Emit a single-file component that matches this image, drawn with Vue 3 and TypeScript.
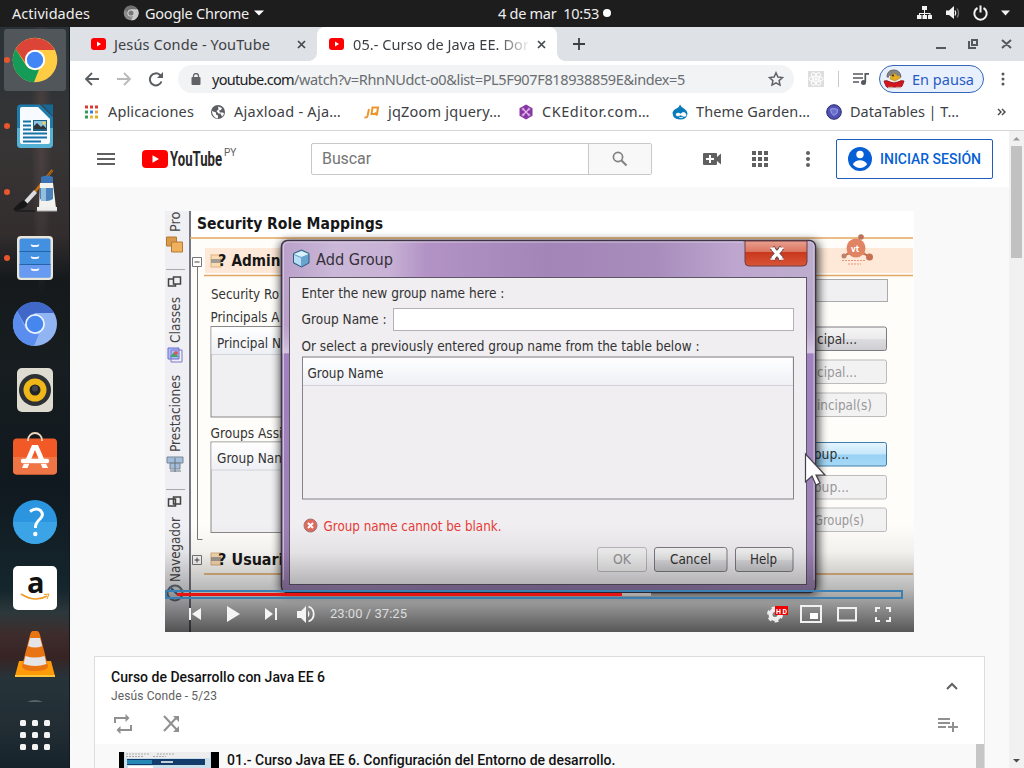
<script setup lang="ts">
import type { Directive } from 'vue'

/* Spreads a label over the given width by adjusting its tracking. */
const vFit: Directive<HTMLElement, number> = {
  mounted(el, { value }) {
    const natural = el.getBoundingClientRect().width
    const count = (el.textContent ?? '').length
    if (count > 0) el.style.letterSpacing = `${(value - natural) / count}px`
  },
}

interface Bookmark { icon: string; label: string; width: number }
const bookmarks: Bookmark[] = [
  { icon: 'apps', label: 'Aplicaciones', width: 86 },
  { icon: 'globe', label: 'Ajaxload - Aja…', width: 107 },
  { icon: 'jq', label: 'jqZoom jquery…', width: 113 },
  { icon: 'ck', label: 'CKEditor.com…', width: 108 },
  { icon: 'drop', label: 'Theme Garden…', width: 114 },
  { icon: 'table', label: 'DataTables | T…', width: 109 },
]
const appColors = ['#d93a32', '#d93a32', '#d93a32', '#2f9e58', '#3b7de0', '#e8a33a', '#2f9e58', '#e8b83a', '#d8b020']
const dock = ['chrome', 'writer', 'paint', 'files', 'chromium', 'rhythm', 'store', 'help', 'amazon', 'vlc']
const running = new Set(['chrome', 'writer', 'paint', 'files'])

interface SideButton { y: number; x: number; w: number; label: string; kind: string }
const sideButtons: SideButton[] = [
  { y: 327, x: 817, w: 40, label: 'cipal...', kind: 'on' },
  { y: 360, x: 817, w: 40, label: 'cipal...', kind: 'off' },
  { y: 393, x: 817, w: 55, label: 'incipal(s)', kind: 'off' },
  { y: 442.5, x: 814, w: 35, label: 'oup...', kind: 'hot' },
  { y: 475.5, x: 814, w: 35, label: 'oup...', kind: 'off' },
  { y: 508, x: 814, w: 50, label: 'Group(s)', kind: 'off' },
]
interface DialogButton { x: number; w: number; tx: number; tw: number; label: string; kind: string }
const dialogButtons: DialogButton[] = [
  { x: 597.5, w: 49, tx: 613, tw: 18, label: 'OK', kind: 'off' },
  { x: 654.5, w: 72.5, tx: 670, tw: 41, label: 'Cancel', kind: 'on' },
  { x: 735.5, w: 57.5, tx: 750, tw: 27, label: 'Help', kind: 'on' },
]
</script>

<template>
  <div class="desktop">
    <header class="topbar">
      <span v-fit="78" class="activities">Actividades</span>
      <svg class="app-mark" width="16" height="16" viewBox="0 0 16 16">
        <circle cx="8" cy="8" r="7.3" fill="#8b8b8b" />
        <path d="M8 4H14.5A7.3 7.3 0 0 1 8 15.3L11 9.5Z" fill="#c9c9c9" />
        <path d="M1.6 4.6A7.3 7.3 0 0 1 14.4 4.2H8L5 8Z" fill="#707070" />
        <circle cx="8" cy="8" r="3.6" fill="#d8d8d8" /><circle cx="8" cy="8" r="2.6" fill="#777" />
      </svg>
      <span v-fit="104" class="app-name">Google Chrome</span>
      <svg class="app-caret" width="10" height="6" viewBox="0 0 10 6"><path d="M0 .5H10L5 5.5Z" fill="#fff" /></svg>
      <span v-fit="101" class="clock">4 de mar&nbsp; 10:53</span>
      <i class="notice" />
      <svg class="tray" width="94" height="18" viewBox="0 0 94 18">
        <g fill="#f2f2f2">
          <path d="M5 2h5v4H5zM0 11h4.5v4H0zM5.500 11H10v4H5.500zM11 11h4v4h-4z" />
          <path d="M7 6h1v3h5.500v2.500h-1V10H8v2H7v-2H3v1.500H2V9h5z" />
          <path d="M29 6.500h3l5-4.500v13L32 11h-3z" />
          <path d="M84 6.500h9l-4.500 5z" />
        </g>
        <g fill="none" stroke="#f2f2f2">
          <path d="M38 6.500q1.500 2.500 0 5" stroke-width="1.300" /><path d="M40 4.500q3 4.500 0 9" stroke="#777" stroke-width="1.300" />
          <path d="M60.500 4a6.200 6.200 0 1 0 6 0M63.500 1.500v7" stroke-width="2" />
        </g>
      </svg>
    </header>

    <div class="workspace">
      <aside class="dock">
        <div v-for="name in dock" :key="name" class="dock-item" :class="{ active: name === 'chrome' }">
          <i v-if="running.has(name)" class="dot" />
          <svg width="46" height="46" viewBox="0 0 46 46">
            <g v-if="name === 'chrome'">
              <circle cx="23" cy="23" r="22.300" fill="#fc4" />
              <path d="M3.700 12A22.300 22.300 0 0 1 42.700 13H23L13.500 26Z" fill="#dc4437" />
              <path d="M3.700 12L14.500 29Q19 34 27 32.500L22 45.300A22.300 22.300 0 0 1 3.700 12Z" fill="#159b58" />
              <circle cx="23" cy="23" r="10.200" fill="#fff" /><circle cx="23" cy="23" r="8.200" fill="#4285f4" />
            </g>
            <g v-else-if="name === 'writer'">
              <path d="M9 1.500H28L41 14V41a4 4 0 0 1-4 4H9a4 4 0 0 1-4-4V5.500a4 4 0 0 1 4-4Z" fill="#1e7bab" />
              <path d="M30 1.500h11v12z" fill="#176795" /><path d="M5 25H41V41a4 4 0 0 1-4 4H9a4 4 0 0 1-4-4Z" fill="#55b2d4" />
              <path d="M10 4H26L38 16V39a2 2 0 0 1-2 2H10a2 2 0 0 1-2-2V6a2 2 0 0 1 2-2Z" fill="#f7fbff" />
              <path d="M11 18.500h8M11 22.500h8M11 26.500h8M11 30.500h24M11 34.500h24M11 38.500h18" stroke="#1673a8" stroke-width="1.800" />
              <path d="M21 17h14v11H21z" fill="#1d6186" /><path d="M22 18h12v8H22z" fill="#8bc4e0" />
              <path d="M22 26v-3l3-3 4 4 2-2 3 3v1z" fill="#333" /><circle cx="32" cy="20" r="1.500" fill="#f9d637" />
            </g>
            <g v-else-if="name === 'paint'">
              <path d="M40.500 1L22 24" stroke="#c8700d" stroke-width="2.600" /><path d="M40.500 1L30 15" stroke="#7a4a1c" stroke-width="1" />
              <path d="M22 21L12 32 15 35 25 24Z" fill="#ddd" />
              <path d="M12 31Q6 34 1 41Q11 42 16 35Z" fill="#171717" /><path d="M3 42h20" stroke="#111" />
              <path d="M28 14H41L44 39H27Z" fill="#f2f2ee" /><path d="M29 8q6-3 12 0v6H29z" fill="#3b73b4" />
              <path d="M28 19h13v11q-6 4-13 0z" fill="#4b82ba" /><path d="M29 19h5v13h-5z" fill="#94bee0" />
              <path d="M25 38h20v4H25z" fill="#eee" /><path d="M25 42h20" stroke="#aaa" />
            </g>
            <g v-else-if="name === 'files'">
              <rect x="5" y="1" width="36" height="44" rx="4" fill="#e8e5da" /><rect x="7.500" y="3.500" width="31" height="39" rx="2" fill="#438fe0" />
              <path d="M7.500 30h31v12.500h-31z" fill="#699af2" /><path d="M7.500 16.500h31M7.500 29.500h31" stroke="#2463a7" />
              <path d="M19.500 9.500q0 1.500 1.500 1.500h4q1.500 0 1.500-1.500M19.500 21.500q0 1.500 1.500 1.500h4q1.500 0 1.500-1.500M19.500 33.500q0 1.500 1.500 1.500h4q1.500 0 1.500-1.500" fill="none" stroke="#f4f4ff" stroke-width="1.800" />
            </g>
            <g v-else-if="name === 'chromium'">
              <circle cx="23" cy="23" r="22" fill="#91b5f3" />
              <path d="M5 10A22 22 0 0 1 42 12H23L13 24Z" fill="#3f68c9" />
              <path d="M5 10L14 28Q19 34 27 33L22 45A22 22 0 0 1 5 10Z" fill="#5b8def" />
              <circle cx="23" cy="23" r="10" fill="#e9f1ff" /><circle cx="23" cy="23" r="8.200" fill="#4586ef" />
            </g>
            <g v-else-if="name === 'rhythm'">
              <rect x="5" y="1" width="36" height="44" rx="5" fill="#dedbd0" /><circle cx="23" cy="23" r="16" fill="#2d3034" />
              <circle cx="23" cy="23" r="11.500" fill="#efb719" /><circle cx="23" cy="23" r="5.500" fill="#222527" />
              <circle cx="23" cy="21.500" r="3" fill="#42464a" />
            </g>
            <g v-else-if="name === 'store'">
              <rect x="1" y="5.500" width="44" height="36" rx="4" fill="#f15a27" /><path d="M1 24h44v13.500a4 4 0 0 1-4 4H5a4 4 0 0 1-4-4z" fill="#f07546" />
              <path d="M16 8V7a7 7 0 0 1 14 0v1" fill="none" stroke="#f2d9bd" stroke-width="1.800" />
              <path d="M20 12h6l10 23h-5.500L23 17l-7.500 18H10z" fill="#fff" /><path d="M11 28h24" stroke="#fff" stroke-width="4.500" stroke-linecap="round" />
              <path d="M11 30.500h24" stroke="#ee8b65" stroke-width=".8" />
            </g>
            <g v-else-if="name === 'help'">
              <circle cx="23" cy="23" r="22" fill="#2b96df" /><path d="M1 23a22 22 0 0 0 44 0z" fill="#3ba4e7" />
              <path d="M18 12.500q6-4.500 10.500-1 4 4-.5 8.500-4.500 4-4.500 8v1" fill="none" stroke="#fff" stroke-width="3" /><circle cx="23.300" cy="35" r="2.200" fill="#fff" />
            </g>
            <g v-else-if="name === 'amazon'">
              <rect x="1" y="1" width="44" height="44" rx="5" fill="#fff" />
              <text x="15" y="28" class="amazon-letter">a</text>
              <path d="M9 29q14 9 26 2" fill="none" stroke="#ef9a24" stroke-width="1.500" /><path d="M32 29.500l5-.5-2 5" fill="none" stroke="#ef9a24" />
            </g>
            <g v-else>
              <path d="M7 30H39L43 45H3Z" fill="#ff9a09" /><path d="M3 44h40v2H3z" fill="#ffc43c" />
              <path d="M21 0h4q2 0 3 4l8 31q0 5-13 5T10 35L18 4q1-4 3-4Z" fill="#e87413" />
              <path d="M18 7h10l2.200 8q-7 3-14.200 0zM13.500 25q9 3 19 0l2 8q-11 4-23 0z" fill="#e5e5e7" />
            </g>
          </svg>
        </div>
        <svg class="dock-grid" width="70" height="70" viewBox="0 698 70 70">
          <path d="M27 702q8-4 16 0z" fill="#58636a" />
          <g fill="#f3f3f3">
            <template v-for="r in 3" :key="r">
              <rect v-for="c in 3" :key="c" :x="8 + c * 12" :y="708 + r * 12" width="6" height="6" rx="1.500" />
            </template>
          </g>
        </svg>
      </aside>

      <main class="browser">
        <div class="tabs">
          <div class="tab idle">
            <svg class="fav" width="15" height="12" viewBox="0 0 15 12"><rect width="15" height="12" rx="3" fill="#f00" /><path d="M6 3.500v5L10 6z" fill="#fff" /></svg>
            <span v-fit="156">Jesús Conde - YouTube</span>
            <svg class="x first" width="9" height="9" viewBox="0 0 9 9"><path d="M1 1l7 7M8 1L1 8" stroke="#45494d" stroke-width="1.700" /></svg>
          </div>
          <div class="tab current">
            <svg class="fav" width="15" height="12" viewBox="0 0 15 12"><rect width="15" height="12" rx="3" fill="#f00" /><path d="M6 3.500v5L10 6z" fill="#fff" /></svg>
            <span class="fade"><span v-fit="176">05.- Curso de Java EE. Dor</span></span>
            <svg class="x" width="9" height="9" viewBox="0 0 9 9"><path d="M1 1l7 7M8 1L1 8" stroke="#45494d" stroke-width="1.700" /></svg>
          </div>
          <svg class="plus" width="12" height="12" viewBox="0 0 12 12"><path d="M6 0v12M0 6h12" stroke="#3c4043" stroke-width="1.800" /></svg>
          <svg class="win" width="76" height="12" viewBox="0 0 76 12">
            <g fill="none" stroke="#55585c" stroke-width="2"><path d="M0 10h10M36 2h5v5h-5zM33 3v7h7M66 2l9 8M75 2l-9 8" /></g>
          </svg>
        </div>

        <div class="toolbar">
          <svg class="nav" width="80" height="16" viewBox="0 0 80 16">
            <g fill="none" stroke-width="1.800">
              <path d="M15 8H2M8 2L2 8l6 6" stroke="#5a5d61" /><path d="M33 8h13M40 2l6 6-6 6" stroke="#b7b9bb" />
              <path d="M77.500 10.500A6 6 0 1 1 76 4l2 2" stroke="#5a5d61" stroke-width="2" />
            </g><path d="M79 1v6h-6z" fill="#5a5d61" />
          </svg>
          <div class="address">
            <svg width="10" height="12" viewBox="0 0 10 12"><rect x=".5" y="4" width="9" height="8" rx="1" fill="#5f6368" /><path d="M2.500 5V3a2.500 2.500 0 0 1 5 0v2" fill="none" stroke="#5f6368" stroke-width="1.300" /></svg>
            <span class="url"><b v-fit="82">youtube.com</b><span v-fit="391">/watch?v=RhnNUdct-o0&amp;list=PL5F907F818938859E&amp;index=5</span></span>
            <svg class="star" width="16" height="16" viewBox="0 0 16 16"><path d="M8 1.800l1.900 4.200 4.600.5-3.400 3.100.9 4.500L8 11.800l-4 2.300.9-4.500L1.500 6.500l4.600-.5z" fill="none" stroke="#5f6368" stroke-width="1.500" /></svg>
          </div>
          <svg class="ext" width="16" height="16" viewBox="0 0 16 16"><rect width="16" height="16" fill="#dedede" /><g fill="none" stroke="#fff"><ellipse cx="8" cy="8" rx="7" ry="2.800" /><ellipse cx="8" cy="8" rx="7" ry="2.800" transform="rotate(60 8 8)" /><ellipse cx="8" cy="8" rx="7" ry="2.800" transform="rotate(120 8 8)" /></g><circle cx="8" cy="8" r="1.500" fill="#fff" /></svg>
          <i class="rule" />
          <svg class="queue" width="16" height="14" viewBox="0 0 16 14"><path d="M0 2h10M0 6h10M0 10h6" stroke="#55585c" stroke-width="1.600" /><circle cx="10.500" cy="10.500" r="2.500" fill="#55585c" /><path d="M12.300 10V1.800H16" fill="none" stroke="#55585c" stroke-width="1.700" /></svg>
          <div class="profile">
            <svg width="22" height="20" viewBox="0 0 22 20">
              <path d="M4 8q0-7 7-7 6 0 7 7z" fill="#858585" stroke="#666" /><path d="M6 7h11v7H6z" fill="#f1efe8" /><path d="M8 6.500q3-4 6 0l4 2-6 3.500-5-2z" fill="#e5ad23" stroke="#a07a22" stroke-width=".5" /><circle cx="10" cy="6.500" r="1" fill="#222" />
              <path d="M1 12q3-1 6 1l4 1 4-1q3-2 6-1l-2 5q-1 2-4 1H7q-4 1-4-1z" fill="#d51420" stroke="#981820" /><path d="M5 18.500h5M13 18.500h5" stroke="#d9a08c" stroke-width="1.500" />
            </svg>
            <span v-fit="62">En pausa</span>
          </div>
          <svg class="dots" width="4" height="14" viewBox="0 0 4 14"><g fill="#55585c"><circle cx="2" cy="2" r="1.500" /><circle cx="2" cy="7" r="1.500" /><circle cx="2" cy="12" r="1.500" /></g></svg>
        </div>

        <nav class="bookmarks">
          <div v-for="mark in bookmarks" :key="mark.label" class="bookmark" :class="mark.icon">
            <svg width="16" height="16" viewBox="0 0 16 16">
              <g v-if="mark.icon === 'apps'"><rect v-for="(color, i) in appColors" :key="i" :x="1 + (i % 3) * 5" :y="1.500 + Math.floor(i / 3) * 5" width="3" height="3" :fill="color" /></g>
              <g v-else-if="mark.icon === 'globe'"><circle cx="8" cy="8" r="7" fill="#5b5e62" /><path d="M2 7l4 1.500v2l2 1v3l-2-.5Q2 11.500 2 7ZM8 2.500l4 1.500-1 2-2 .5 1 2h3l1 1q-.5 2-2 3l-1.500-3H8.500L6.500 7l2-1.500z" fill="#fff" /></g>
              <g v-else-if="mark.icon === 'jq'" fill="none" stroke="#eb972e" stroke-width="2"><path d="M5 5L3.500 12q-.5 2-3 1.500" /><path d="M8.500 3.500h5.500l-1 6.500H7.500z" /><path d="M11 8.500l2 3" /></g>
              <g v-else-if="mark.icon === 'ck'"><path d="M8 .5l6.500 3.700v7.500L8 15.500l-6.500-3.800V4.200z" fill="#8637a5" /><path d="M5 5l6 6M11 5l-6 6" stroke="#e3b9ee" stroke-width="1.300" /><g fill="none" stroke="#e3b9ee" stroke-width=".8"><circle cx="5" cy="5" r="1" /><circle cx="11" cy="5" r="1" /><circle cx="5" cy="11" r="1" /><circle cx="11" cy="11" r="1" /></g></g>
              <g v-else-if="mark.icon === 'drop'"><path d="M8 .5q1 2.500 4 4 3 2 3.500 5Q15 15.500 8 15.500T.5 9q.5-3 4-4.500Q7.500 3 8 .5Z" fill="#087bbb" /><path d="M4 10q2-2 4.500 0 3-3 5-.5t-1.500 3L8.500 11Q4 13.500 4 10Zm3 3q2 1.500 4 .3" fill="#fff" stroke="#fff" stroke-width=".6" /></g>
              <g v-else><circle cx="8" cy="8" r="7.300" fill="#5053b5" stroke="#292b62" /><path d="M4.500 5q3.500-1 7 .5 1 4-3.500 6-3.500-1.500-3.500-6.500Z" fill="#6d70ca" stroke="#a0a4ea" stroke-width=".9" /></g>
            </svg>
            <span v-fit="mark.width">{{ mark.label }}</span>
          </div>
          <svg class="more" width="10" height="8" viewBox="0 0 10 8"><path d="M1 1l3 3-3 3M5 1l3 3-3 3" fill="none" stroke="#444" stroke-width="1.400" /></svg>
        </nav>

        <div class="viewport">
          <div class="page">
            <header class="masthead">
              <svg class="burger" width="18" height="12" viewBox="0 0 18 12"><path d="M0 1h18M0 6h18M0 11h18" stroke="#606060" stroke-width="2" /></svg>
              <svg class="yt" width="26" height="18" viewBox="0 0 26 18"><rect width="26" height="18" rx="4" fill="#f00" /><path d="M10.500 5.200v7.600L17 9z" fill="#fff" /></svg>
              <svg class="word" width="53" height="24" viewBox="0 0 53 24"><text x="0" y="19" textLength="52" lengthAdjust="spacingAndGlyphs">YouTube</text></svg>
              <sup>PY</sup>
              <div class="search"><span class="field"><span v-fit="49">Buscar</span></span><span class="go"><svg width="16" height="16" viewBox="0 0 16 16"><circle cx="6" cy="6" r="4.600" fill="none" stroke="#808080" stroke-width="1.700" /><path d="M9.500 9.500l5 5" stroke="#808080" stroke-width="2" /></svg></span></div>
              <svg class="cam" width="19" height="12" viewBox="0 0 19 12"><path fill-rule="evenodd" d="M1 0h12q1 0 1 1v3l4-3.500v11L14 8v3q0 1-1 1H1q-1 0-1-1V1q0-1 1-1Zm5 2v3H3v2h3v3h2V7h3V5H8V2Z" fill="#606060" /></svg>
              <svg class="nine" width="16" height="16" viewBox="0 0 16 16"><path d="M0 0h4v4H0zM6 0h4v4H6zM12 0h4v4h-4zM0 6h4v4H0zM6 6h4v4H6zM12 6h4v4h-4zM0 12h4v4H0zM6 12h4v4H6zM12 12h4v4h-4z" fill="#606060" /></svg>
              <svg class="kebab" width="4" height="16" viewBox="0 0 4 16"><g fill="#606060"><circle cx="2" cy="2" r="2" /><circle cx="2" cy="8" r="2" /><circle cx="2" cy="14" r="2" /></g></svg>
              <div class="signin"><svg width="24" height="24" viewBox="0 0 24 24"><circle cx="12" cy="12" r="12" fill="#065fd4" /><circle cx="12" cy="7.500" r="3.700" fill="#fff" /><path d="M4.800 17.300q2.500-4 7.200-4t7.200 4Q16.500 21 12 21t-7.200-3.700Z" fill="#fff" /></svg><span v-fit="101">INICIAR SESIÓN</span></div>
            </header>

            <section class="player">
              <svg class="still" width="749" height="421" viewBox="165 211 749 421">
                <defs>
                  <linearGradient id="title" x2="1" y2="0"><stop offset="0" stop-color="#b9a0c9" /><stop offset=".1" stop-color="#cbb8d8" /><stop offset=".2" stop-color="#c8b2d5" /><stop offset=".27" stop-color="#b393c6" /><stop offset=".5" stop-color="#a385b7" /><stop offset=".7" stop-color="#a88dbc" /><stop offset=".85" stop-color="#bea6cf" /><stop offset="1" stop-color="#bcadcd" /></linearGradient>
                  <linearGradient id="gloss" x2="0" y2="1"><stop offset="0" stop-color="#b79bc6" stop-opacity=".1" /><stop offset=".15" stop-color="#b79bc6" stop-opacity=".3" /><stop offset=".24" stop-color="#e8ddf1" stop-opacity=".6" /><stop offset=".245" stop-color="#9a78bd" stop-opacity=".8" /><stop offset="1" stop-color="#9479ad" stop-opacity=".8" /></linearGradient>
                  <linearGradient id="red" x2="0" y2="1"><stop offset="0" stop-color="#e8a090" /><stop offset=".43" stop-color="#db755f" /><stop offset=".45" stop-color="#c9371c" /><stop offset="1" stop-color="#d95538" /></linearGradient>
                  <linearGradient id="btn" x2="0" y2="1"><stop offset="0" stop-color="#f6f6f6" /><stop offset=".5" stop-color="#ebebec" /><stop offset=".52" stop-color="#dddde1" /><stop offset="1" stop-color="#ceced2" /></linearGradient>
                  <linearGradient id="hot" x2="0" y2="1"><stop offset="0" stop-color="#e6f5fe" /><stop offset=".5" stop-color="#c5e7fa" /><stop offset=".52" stop-color="#98d2f6" /><stop offset="1" stop-color="#a7d9f6" /></linearGradient>
                  <linearGradient id="head" x2="0" y2="1"><stop offset="0" stop-color="#fff" /><stop offset="1" stop-color="#eef0f5" /></linearGradient>
                  <linearGradient id="dark" x2="0" y2="1"><stop offset="0" stop-color="#000" stop-opacity="0" /><stop offset=".25" stop-color="#000" stop-opacity=".05" /><stop offset=".6" stop-color="#000" stop-opacity=".28" /><stop offset="1" stop-color="#000" stop-opacity=".66" /></linearGradient>
                  <filter id="shade" x="-10%" y="-10%" width="120%" height="120%"><feGaussianBlur stdDeviation="5" /></filter>
                </defs>
                <rect x="165" y="211" width="749" height="421" fill="#fffdf9" />
                <rect x="190" y="211" width="724" height="27" fill="#fff" /><rect x="190" y="575" width="724" height="57" fill="#fff" />
                <rect x="165" y="211" width="25" height="421" fill="#f0eff3" />
                <path d="M190 211v421" stroke="#777783" stroke-width="2" />
                <g class="vertical">
                  <text transform="translate(180 232) rotate(-90)" textLength="20.500" lengthAdjust="spacingAndGlyphs">Pro</text>
                  <text transform="translate(180 343) rotate(-90)" textLength="46" lengthAdjust="spacingAndGlyphs">Classes</text>
                  <text transform="translate(180 452) rotate(-90)" textLength="77" lengthAdjust="spacingAndGlyphs">Prestaciones</text>
                  <text transform="translate(180 582) rotate(-90)" textLength="65" lengthAdjust="spacingAndGlyphs">Navegador</text>
                </g>
                <path d="M166 269.500h19M166 489.500h19" stroke="#aaa" />
                <g stroke="#b47a30"><path d="M166.500 237h10v9h-10z" fill="#d99a4e" /><path d="M171.500 242h11v10h-11z" fill="#efb15e" /></g>
                <g fill="#f0eff3" stroke="#444" stroke-width="1.500"><path d="M168.500 279h7v7h-7z" /><path d="M173.500 277h7v7h-7zM168.500 499h7v7h-7zM173.500 497h7v7h-7z" /></g>
                <path d="M168 348h11v11h-11z" fill="#b0bdfa" stroke="#6870c9" /><path d="M171 350h11v12h-11z" fill="none" stroke="#7c77ce" /><path d="M170 357l4-5 5 5z" fill="#47a270" /><circle cx="176" cy="353" r="2" fill="#d65a65" />
                <path d="M167 457h16v6h-16zM170 463h10v6h-10z" fill="#a3bddb" stroke="#7b8792" /><path d="M175 458v14M170 471h11" stroke="#647784" />
                <circle cx="175" cy="593" r="7.500" fill="#ddd" stroke="#68727e" stroke-width="2" /><path d="M171 588l7 7" stroke="#2c75ae" stroke-width="2" />
                <text x="197" y="228.500" class="heading" textLength="186" lengthAdjust="spacingAndGlyphs">Security Role Mappings</text>
                <rect x="205" y="248" width="708" height="25" fill="#fee8d7" />
                <path d="M190 238h723M204 275.500h709M204 574h709" stroke="#e4a661" stroke-width="1.500" />
                <path d="M197.500 266v273.500h5" fill="none" stroke="#777" />
                <path d="M192.500 257.500h9v9h-9zM192.500 555.500h9v9h-9z" fill="#fff" stroke="#777" /><path d="M194.500 262h5M194.500 560h5M197 557.500v5" stroke="#444" />
                <g v-for="y in [255, 553]" :key="y"><rect x="211" :y="y" width="10" height="12" fill="#fbdcb2" stroke="#d9b383" /><path :d="`M211 ${y + 5}h10M211 ${y + 7}h10`" stroke="#888" stroke-width="1.500" /></g>
                <g class="heading"><text x="218" y="266">?</text><text x="231.500" y="266" textLength="49" lengthAdjust="spacingAndGlyphs">Admin</text><text x="218" y="565">?</text><text x="231.500" y="565" textLength="52" lengthAdjust="spacingAndGlyphs">Usuari</text></g>
                <g v-for="y in [326.500, 442]" :key="y"><rect x="211" :y="y" width="90" height="90.500" fill="#f0eff1" stroke="#898989" /><rect x="211.500" :y="y + .5" width="85" height="27" fill="url(#head)" /><path :d="`M212 ${y + 28}h80`" stroke="#d2d4d9" /></g>
                <g class="label">
                  <text x="211" y="299" textLength="68" lengthAdjust="spacingAndGlyphs">Security Ro</text><text x="210.500" y="322" textLength="69" lengthAdjust="spacingAndGlyphs">Principals A</text>
                  <text x="217" y="347.500" textLength="64" lengthAdjust="spacingAndGlyphs">Principal N</text><text x="210.500" y="438" textLength="72" lengthAdjust="spacingAndGlyphs">Groups Assi</text><text x="217" y="463" textLength="65" lengthAdjust="spacingAndGlyphs">Group Nan</text>
                </g>
                <rect x="790" y="279.500" width="97.500" height="22" fill="#f0eff1" stroke="#aaa" />
                <g v-for="(b, i) in sideButtons" :key="i">
                  <rect x="780" :y="b.y" width="106.500" height="23.500" rx="2" :class="['button', b.kind]" />
                  <text :x="b.x" :y="b.y + 16.500" :class="['label', b.kind]" :textLength="b.w" lengthAdjust="spacingAndGlyphs">{{ b.label }}</text>
                </g>
                <g fill="#e08464"><path d="M860 237l-4 10 14 10-14-6-14 6 14-10z" stroke="#c56a4b" /><circle cx="856" cy="248" r="9.500" /><circle cx="861" cy="237" r="2.800" fill="#bc7158" /><circle cx="869.500" cy="257" r="3.500" fill="#c96f52" /><circle cx="844" cy="256" r="2.500" fill="#bd8269" /></g>
                <text x="851" y="251.500" class="vt">vt</text><path d="M842 260.500h24M848 264h13" stroke="#e8967f" stroke-dasharray="2 1" />
                <rect x="280" y="241" width="539" height="353" rx="7" fill="#000" opacity=".7" filter="url(#shade)" />
                <rect x="281.500" y="240.500" width="534" height="352" rx="6" fill="url(#title)" stroke="#3d3545" stroke-width="1.500" />
                <path d="M282.500 277h6.500v308h518V277h7.500v310q0 4-4 4H286.500q-4 0-4-4z" fill="url(#gloss)" />
                <path d="M283.500 580V247q0-5 5-5H743M807.500 242h2q4.500 0 4.500 5v333" fill="none" stroke="#e2d4e9" opacity=".75" />
                <rect x="289.500" y="277.500" width="517" height="307" fill="#f0eef1" stroke="#5e5567" />
                <path d="M293.500 253.500l8-3.500 7.500 3.500V263l-7.500 4-8-4z" fill="#68a4ce" stroke="#315b81" /><path d="M294 254l7.500 3 7-3-7-3z" fill="#d9f2fd" /><path d="M294 255l7 3v8l-7-4z" fill="#b9ddf3" />
                <text x="316" y="265" class="caption" textLength="77" lengthAdjust="spacingAndGlyphs">Add Group</text>
                <path d="M745 241h62v21q0 4-4 4h-54q-4 0-4-4z" fill="url(#red)" stroke="#713d40" /><path d="M772 247.500l10 12M782 247.500l-10 12" stroke="#704a50" stroke-width="5.500" /><path d="M772.500 248.500l9 10M781.500 248.500l-9 10" stroke="#fff" stroke-width="3.400" /><path d="M770.500 248.200h4.500M779 248.200h4.500M770.500 259h4.500M779 259h4.500" stroke="#fff" stroke-width="1.600" />
                <rect x="393.500" y="308.500" width="400" height="22" fill="#fff" stroke="#b3b1b7" />
                <rect x="302.500" y="357" width="491" height="142" fill="#f0eef1" stroke="#858288" /><rect x="303" y="358" width="489" height="27" fill="url(#head)" /><path d="M303 385.500h490" stroke="#d5d3d8" />
                <g class="label">
                  <text x="301.500" y="297.500" textLength="203" lengthAdjust="spacingAndGlyphs">Enter the new group name here :</text>
                  <text x="301.500" y="324" textLength="85" lengthAdjust="spacingAndGlyphs">Group Name :</text>
                  <text x="301.500" y="350.500" textLength="398" lengthAdjust="spacingAndGlyphs">Or select a previously entered group name from the table below :</text>
                  <text x="307.500" y="378" textLength="76" lengthAdjust="spacingAndGlyphs">Group Name</text>
                  <text x="323.500" y="531" class="error" textLength="178" lengthAdjust="spacingAndGlyphs">Group name cannot be blank.</text>
                </g>
                <circle cx="310.500" cy="525.500" r="6.500" fill="#e06a5c" stroke="#9d7777" /><path d="M308 523l5 5M313 523l-5 5" stroke="#fff" stroke-width="2" />
                <g v-for="b in dialogButtons" :key="b.label">
                  <rect :x="b.x" y="547.500" :width="b.w" height="24" rx="2.500" :class="['button', b.kind]" />
                  <text :x="b.tx" y="564" :class="['label', b.kind]" :textLength="b.tw" lengthAdjust="spacingAndGlyphs">{{ b.label }}</text>
                </g>
                <rect x="165" y="525" width="749" height="107" fill="url(#dark)" />
                <path d="M805.500 454v28l6.500-6 4 9 4-2-4-8h9z" fill="#fff" stroke="#45404b" stroke-width="1.200" />
              </svg>
              <div class="progress"><i class="played" /><i class="buffered" /></div>
              <div class="controls">
                <svg width="130" height="20" viewBox="187 604 130 20"><g fill="#f4f4f4"><path d="M189 608h2v12h-2zM201 608v12l-9-6zM227 606v16l13-8zM265 608v12l8-6zM275 608h2v12h-2zM297 611h4l5-5v17l-5-5h-4z" /><path d="M308 610.500q3 3.500 0 7z" /></g><path d="M308.500 606.500a8 8 0 0 1 0 15" fill="none" stroke="#f4f4f4" stroke-width="1.800" /></svg>
                <span v-fit="77" class="time">23:00 / 37:25</span>
                <svg class="right" width="128" height="20" viewBox="765 604 128 20">
                  <circle cx="775" cy="614.500" r="4.500" fill="none" stroke="#eee" stroke-width="4" /><circle cx="775" cy="614.500" r="7" fill="none" stroke="#eee" stroke-width="2" stroke-dasharray="4 3.330" />
                  <rect x="775" y="606" width="13" height="9" fill="#e00" /><text x="776" y="613.500" class="hd" textLength="11">HD</text>
                  <g fill="none" stroke="#f1f1f1" stroke-width="2"><path d="M801 606h20v16h-20zM838 608h18v12.500h-18zM876 612v-4h4M886 608h4v4M890 617v4h-4M880 621h-4v-4" /></g><path d="M810 613h8v6h-8z" fill="#fff" />
                </svg>
              </div>
            </section>

            <section class="playlist">
              <div class="playlist-head">
                <div class="title-row"><div><h2 v-fit="214">Curso de Desarrollo con Java EE 6</h2></div><svg width="12" height="8" viewBox="0 0 12 8"><path d="M1 7l5-5 5 5" fill="none" stroke="#606060" stroke-width="2" /></svg></div>
                <div class="author"><span v-fit="106">Jesús Conde - 5/23</span></div>
                <div class="actions">
                  <svg width="70" height="20" viewBox="112 714 70 20"><g fill="none" stroke="#909090" stroke-width="2"><path d="M115 723v-5h12M131 725v5h-12M164 716l14 15M164 731l13-14" /></g><path d="M125.500 714l4 4-4 4zM120.500 726l-4 4 4 4zM173 716h6v6zM173 732h6v-6z" fill="#909090" /></svg>
                  <svg width="20" height="15" viewBox="0 0 20 15"><path d="M0 2h12M0 6h12M0 10h8M10 10h10M15 5v10" fill="none" stroke="#909090" stroke-width="2" /></svg>
                </div>
              </div>
              <div class="playlist-body">
                <svg width="100" height="16" viewBox="0 0 100 16"><rect width="100" height="16" /><path d="M5 0h87v16H5z" fill="#cbdfea" /><path d="M6 0h85v6H6z" fill="#eee" /><path d="M7 2h24M38 2h18M7 4.500h18M34 4.500h13" stroke="#aaa" stroke-dasharray="2 1" /><path d="M8 7h78v6H8z" fill="#133c6a" /><path d="M8 8h25v4H8z" fill="#2688b5" /><path d="M42 10h12" stroke="#fff" stroke-width="1.500" /><path d="M9 14h25v2H9z" fill="#fff" /></svg>
                <span v-fit="388">01.- Curso Java EE 6. Configuración del Entorno de desarrollo.</span>
                <i class="inner-thumb" />
              </div>
            </section>
          </div>
          <div class="scrollbar"><svg width="15" height="15" viewBox="0 0 15 15"><path d="M4 9.500h7L7.500 6z" fill="#999" /></svg><i /><svg class="down" width="15" height="15" viewBox="0 0 15 15"><path d="M4 6h7L7.500 9.500z" fill="#4b4b4b" /></svg></div>
        </div>
      </main>
    </div>
  </div>
</template>

<style>
html, body { margin: 0; overflow: hidden; }
</style>

<style scoped>
* { box-sizing: border-box; }
svg { display: block; flex: none; }
span { white-space: nowrap; }
.desktop { width: 1024px; height: 768px; overflow: hidden; font-family: "Noto Sans", "Open Sans", sans-serif; font-size: 14.5px; }
.topbar { height: 27px; background: #1d1d1d; color: #eee; display: flex; align-items: center; padding: 0 0 1px 12px; }
.topbar > span { flex: none; line-height: 20px; }
.app-mark { margin-left: 33px; }
.app-name { margin-left: 6px; }
.app-caret { margin-left: 5px; }
.clock { margin-left: 234px; }
.notice { width: 8px; height: 8px; border-radius: 50%; background: #fff; margin-left: 4px; }
.tray { margin-left: 306px; }
.workspace { display: flex; height: 741px; }
.dock { width: 70px; flex: none; padding-top: 2px; border-right: 1px solid #151a1e; display: flex; flex-direction: column; align-items: center; background: radial-gradient(ellipse at 60% 15%, #4b4140 0, transparent 18%), linear-gradient(#293238 0, #373535 16%, #332d2e 28%, #15191c 34%, #171d20 46%, #10191f 62%, #15262d 76%, #2c383b 79%, #3e2c2c 82%, #382323 85%, #26343a 88%, #222d34 94%, #17232b); }
.dock-item { position: relative; width: 62px; height: 62px; margin-bottom: 4px; display: grid; place-items: center; flex: none; border-radius: 3px; }
.dock-item svg { overflow: visible; }
.dock-item.active { background: #51565a; }
.dot { position: absolute; left: 0; top: 28px; width: 6px; height: 6px; border-radius: 50%; background: #e9562d; }
.amazon-letter { font: bold 29px "Open Sans", sans-serif; fill: #111; }
.dock-grid { margin-top: 9px; }
.browser { width: 954px; background: #fff; color: #3d4044; }
.tabs { height: 34px; background: #dee1e6; display: flex; align-items: center; }
.tab { height: 34px; display: flex; align-items: center; flex: none; }
.tab > span { padding-bottom: 1px; }
.idle { width: 247px; padding-left: 21px; }
.idle .fav { margin-right: 8px; }
.current { position: relative; width: 240px; padding-left: 12px; background: #fff; border-radius: 8px 8px 0 0; }
.current::before, .current::after { content: ""; position: absolute; bottom: 0; width: 8px; height: 8px; }
.current::before { left: -8px; background: radial-gradient(circle at 0 0, transparent 7.5px, #fff 8px); }
.current::after { right: -8px; background: radial-gradient(circle at 100% 0, transparent 7.5px, #fff 8px); }
.current .fav { margin-right: 9px; }
.fade { width: 175px; overflow: hidden; -webkit-mask-image: linear-gradient(90deg, #000 145px, transparent 178px); mask-image: linear-gradient(90deg, #000 145px, transparent 178px); }
.x { margin-left: 9px; }
.x.first { margin-left: 27px; }
.plus { margin-left: 16px; }
.win { margin-left: 351px; }
.toolbar { height: 36px; display: flex; align-items: center; padding-left: 14px; }
.address { margin-left: 14px; width: 616px; height: 28px; border-radius: 14px; background: #f1f3f4; display: flex; align-items: center; padding-left: 13px; flex: none; }
.url { display: flex; margin-left: 11px; width: 473px; color: #6a6d71; padding-bottom: 1px; }
.url b { font-weight: 400; color: #202124; }
.star { margin-left: 83px; }
.ext { margin-left: 14px; }
.rule { width: 1px; height: 16px; background: #c9cbcd; margin-left: 14px; }
.queue { margin-left: 14px; }
.profile { width: 105px; height: 28px; border: 1px solid #3566b7; border-radius: 14px; background: #e8f0fd; color: #285bc1; display: flex; align-items: center; padding-left: 3px; margin-left: 10px; }
.profile span { margin-left: 7px; padding-bottom: 1px; }
.dots { margin-left: 17px; }
.bookmarks { height: 34px; border-bottom: 1px solid #d4d5d7; display: flex; align-items: center; padding: 0 0 4px 14px; }
.bookmark { display: flex; align-items: center; gap: 8px; flex: none; }
.bookmark span { padding-bottom: 1px; }
.globe { margin-left: 16px; }
.jq { margin-left: 23px; }
.ck { margin-left: 17px; }
.drop { margin-left: 22px; }
.table { margin-left: 16px; }
.more { margin-left: 38px; }
.viewport { display: flex; height: 637px; }
.page { width: 939px; overflow: hidden; background: #f9f9f9; font-family: Roboto, sans-serif; }
.scrollbar { width: 15px; background: #f1f1f1; display: flex; flex-direction: column; }
.scrollbar i { width: 11px; height: 112px; margin-left: 2px; background: #c1c1c1; }
.down { margin-top: auto; }
.masthead { height: 56px; background: #fff; display: flex; align-items: center; padding-left: 27px; }
.yt { margin-left: 27px; }
.word { margin-left: 2px; overflow: visible; }
.word text { font: bold 20px "Roboto", sans-serif; fill: #282828; }
sup { font-size: 10px; line-height: 10px; color: #606060; align-self: flex-start; margin: 17px 0 0 1px; width: 12px; }
.search { margin-left: 75px; width: 341px; height: 32px; display: flex; border: 1px solid #c8c8c8; border-radius: 2px; flex: none; }
.field { width: 276px; padding-left: 10px; line-height: 30px; font-size: 16px; color: #757575; }
.go { flex: 1; background: #f8f8f8; border-left: 1px solid #c8c8c8; display: grid; place-items: center; padding-right: 1px; }
.cam { margin-left: 51px; }
.nine { margin-left: 30px; }
.kebab { margin-left: 38px; }
.signin { width: 157px; height: 40px; margin-left: 26px; border: 1px solid #1c5dbf; border-radius: 2px; padding-left: 11px; display: flex; align-items: center; gap: 8px; color: #065fd4; font-size: 14px; font-weight: 500; flex: none; }
.player { position: relative; width: 749px; height: 421px; margin: 24px 0 0 95px; }
.still text { font-family: "DejaVu Sans Condensed", "DejaVu Sans", sans-serif; }
.still .label { font-size: 13.5px; fill: #333; }
.still .label text { font-size: 13.5px; }
.still .vertical { font-size: 13.5px; fill: #444; }
.still .heading { font-size: 16px; font-weight: 700; fill: #171717; }
.still .caption { font-size: 16px; fill: #343039; }
.still .error { fill: #e63c37; }
.still .label.off { fill: #98979a; }
.still .vt { font-size: 8px; font-weight: 700; fill: #fff; }
.button { fill: url(#btn); stroke: #7c7c80; }
.button.off { fill: #f3f2f2; stroke: #bcbbbc; }
.button.hot { fill: url(#hot); stroke: #407da8; }
.progress { position: absolute; left: 0; top: 379px; width: 738px; height: 9px; border: 2px solid #3b7fb3; display: flex; align-items: center; padding-left: 10px; }
.progress i { height: 3px; }
.played { width: 445px; background: #e71414; }
.buffered { width: 29px; background: #aaa; }
.controls { position: absolute; left: 22px; right: 21px; bottom: 8px; height: 20px; display: flex; align-items: center; color: #ddd; font-size: 13px; }
.time { margin-left: 13px; padding-bottom: 1px; }
.right { margin-left: auto; }
.hd { font: bold 7px Roboto, sans-serif; fill: #fff; }
.playlist { width: 891px; height: 130px; margin: 24px 0 0 24px; border: 1px solid #ddd; background: #fff; }
.playlist-head { height: 87px; padding: 12px 26px 0 16px; }
.title-row { display: flex; justify-content: space-between; align-items: center; height: 17px; }
.title-row svg { margin-top: 16px; }
h2 { display: inline-block; margin: 0; font-size: 14px; line-height: 17px; font-weight: 500; color: #111; white-space: nowrap; }
.author { font-size: 12px; line-height: 16px; margin-top: 2px; color: #606060; }
.actions { display: flex; justify-content: space-between; align-items: center; margin-top: 10px; padding-left: 1px; }
.playlist-body { background: #f9f9f9; height: 42px; display: flex; align-items: flex-start; padding-left: 24px; }
.playlist-body > svg { margin-top: 8px; }
.playlist-body span { margin: 7px 0 0 8px; font-size: 14px; font-weight: 500; line-height: 18px; color: #111; }
.inner-thumb { width: 8px; height: 42px; background: #c6c6c6; margin-left: auto; }
</style>
